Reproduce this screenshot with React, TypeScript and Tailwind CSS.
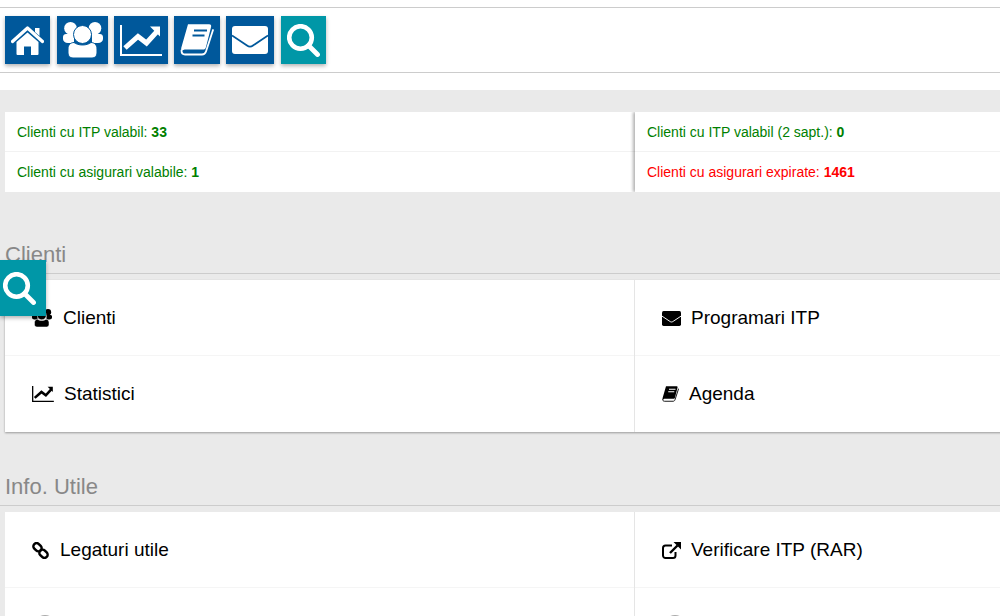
import type { ReactNode } from 'react'

type IconProps = { className?: string; gapColor?: string }

function HomeIcon({ className }: IconProps) {
  return (
    <svg viewBox="0 0 33 29" className={className}>
      <path d="M1.500 15.500 16.500 2l15 13.500" fill="none" stroke="currentColor" strokeWidth="3.200" strokeLinecap="round" strokeLinejoin="round" />
      <path d="M24 2h4.500v8L24 6z" fill="currentColor" />
      <path d="M16.500 6.500 27.500 16v12a1 1 0 0 1-1 1H20v-8.500h-7V29H6.500a1 1 0 0 1-1-1V16z" fill="currentColor" />
    </svg>
  )
}

function UsersIcon({ className, gapColor = '#00589b' }: IconProps) {
  return (
    <svg viewBox="0 0 40 36" className={className}>
      <circle cx="7.500" cy="6.300" r="6.300" fill="currentColor" />
      <circle cx="32" cy="6.300" r="6.300" fill="currentColor" />
      <path d="M0 15c0-2 1.500-3 3-3h8v9H5c-3 0-5-2-5-4zM40 15c0-2-1.500-3-3-3h-8v9h6c3 0 5-2 5-4z" fill="currentColor" />
      <circle cx="19.500" cy="12.500" r="9" fill="currentColor" stroke={gapColor} strokeWidth="1" />
      <path d="M5 27c0-4 2.500-6.500 6-6.500 2 1.500 5 2.500 8.500 2.500s6.500-1 8.500-2.500c3.500 0 6 2.500 6 6.500v4c0 3-2 5-5 5H10c-3 0-5-2-5-5z" fill="currentColor" stroke={gapColor} strokeWidth="1" />
    </svg>
  )
}

function ChartIcon({ className, axis = 2 }: IconProps & { axis?: number }) {
  return (
    <svg viewBox="0 0 42 31" className={className}>
      <path d="M1 0v30h41" fill="none" stroke="currentColor" strokeWidth={axis} />
      <path d="M5 23 18 11.500l8.500 6.500L37 6.500" fill="none" stroke="currentColor" strokeWidth="5" />
      <path d="M30 1.500h10v10z" fill="currentColor" />
    </svg>
  )
}

function BookIcon({ className, gapColor = '#00589b' }: IconProps) {
  return (
    <svg viewBox="0 0 34 32" className={className}>
      <path d="M8 .3h21c2 0 2.500 1 2 3L26 23c-.5 2-1.500 2.500-3 2.500H6c-2 0-3.500.5-4 1.500-1-1-1-2.500-.5-4z" fill="currentColor" />
      <path d="M14 6.500h13M12.500 11.500h12" stroke={gapColor} strokeWidth="2" fill="none" />
      <path d="M1.500 26.500c0 3 1 4 3.500 4h17c2 0 3.300-1 4-3L33 6" fill="none" stroke="currentColor" strokeWidth="1.800" strokeLinecap="round" />
    </svg>
  )
}

function MailIcon({ className, gapColor = '#00589b' }: IconProps) {
  return (
    <svg viewBox="0 0 36 28" className={className}>
      <rect x="0" y="0" width="36" height="28" rx="3" fill="currentColor" />
      <path d="M0 9.500 15 19.500c2 1.500 4 1.500 6 0L36 9.500" fill="none" stroke={gapColor} strokeWidth="1.800" />
    </svg>
  )
}

function SearchIcon({ className }: IconProps) {
  return (
    <svg viewBox="0 0 33 33" className={className}>
      <circle cx="13.500" cy="13.500" r="11.300" fill="none" stroke="currentColor" strokeWidth="4.600" />
      <path d="M21.500 21.500 30.500 30.500" stroke="currentColor" strokeWidth="4.800" strokeLinecap="round" />
    </svg>
  )
}

function ChainIcon({ className }: IconProps) {
  return (
    <svg viewBox="0 0 17 17" className={className}>
      <rect x="1" y="2" width="9" height="6.400" rx="3.200" transform="rotate(45 5.500 5.200)" fill="none" stroke="currentColor" strokeWidth="2.500" />
      <rect x="7" y="8.600" width="9" height="6.400" rx="3.200" transform="rotate(45 11.500 11.800)" fill="none" stroke="currentColor" strokeWidth="2.500" />
    </svg>
  )
}

function ExternalIcon({ className }: IconProps) {
  return (
    <svg viewBox="0 0 19 17" className={className}>
      <path d="M10 3.500H3.500a2.500 2.500 0 0 0-2.500 2.500v7.500a2.500 2.500 0 0 0 2.500 2.500H11a2.500 2.500 0 0 0 2.500-2.500V10" fill="none" stroke="currentColor" strokeWidth="2" />
      <path d="M11.500 0H19v7.500z" fill="currentColor" />
      <path d="M15.500 3.500 8 11" stroke="currentColor" strokeWidth="2.400" />
    </svg>
  )
}

const TOOLBAR = [
  { box: 'w-[45px]', bg: 'bg-[#00589b]', icon: <HomeIcon className="w-[33px] h-[29px]" /> },
  { box: 'w-[51px] ml-[7px]', bg: 'bg-[#00589b]', icon: <UsersIcon className="w-[40px] h-[36px]" /> },
  { box: 'w-[54px] ml-[6px]', bg: 'bg-[#00589b]', icon: <ChartIcon className="w-[42px] h-[31px]" /> },
  { box: 'w-[46px] ml-[6px]', bg: 'bg-[#00589b]', icon: <BookIcon className="w-[34px] h-[32px]" /> },
  { box: 'w-[48px] ml-[6px]', bg: 'bg-[#00589b]', icon: <MailIcon className="w-[36px] h-[28px]" /> },
  { box: 'w-[45px] ml-[7px]', bg: 'bg-[#0097a7]', icon: <SearchIcon className="w-[33px] h-[33px]" /> },
]

function Stat({ label, value, color }: { label: string; value: string; color: string }) {
  return (
    <span className={`text-[14px] ${color}`}>
      {label} <b>{value}</b>
    </span>
  )
}

function NavItem({ icon, label, h = 'h-[76px]', gap = 'gap-[10px]' }: { icon: ReactNode; label: string; h?: string; gap?: string }) {
  return (
    <div className={`flex items-center pl-[27px] text-[19px] text-black ${h} ${gap}`}>
      {icon}
      <span>{label}</span>
    </div>
  )
}

// 세 번째 줄은 화면 아래로 잘려서 아이콘 윗부분만 보인다
function ClippedRow() {
  return (
    <div className="flex items-center h-[76px] pl-[27px] text-[#aaa]">
      <svg viewBox="0 0 26 22" className="w-[26px] h-[22px]">
        <circle cx="13" cy="11" r="11" fill="currentColor" />
      </svg>
    </div>
  )
}

function Heading({ children }: { children: string }) {
  return (
    <h2 className="text-[22px] leading-[26px] text-[#888] pl-[5px] pb-[5px] border-b border-[#ccc]">
      {children}
    </h2>
  )
}

const RIGHT_SHADOW = 'shadow-[-2px_0_3px_rgba(0,0,0,0.3)] [clip-path:inset(0_0_0_-6px)]'

export default function App() {
  return (
    <div
      className="relative h-[616px] w-[1000px] overflow-hidden bg-[#eaeaea]"
      style={{ fontFamily: '"Liberation Sans", Arial, sans-serif' }}
    >
      {/* 상단 툴바 */}
      <div className="bg-white h-[90px] pt-[7px]">
        <div className="flex h-[66px] pl-[5px] pt-[8px] border-y border-[#ccc]">
          {TOOLBAR.map((b, i) => (
            <div
              key={i}
              className={`flex items-center justify-center h-[48px] text-white shadow-[0_2px_4px_rgba(0,0,0,0.3)] ${b.box} ${b.bg}`}
            >
              {b.icon}
            </div>
          ))}
        </div>
      </div>

      {/* 통계 */}
      <div className="ml-[5px] mt-[22px] w-[1100px] grid grid-cols-[630px_1fr]">
        <div className="bg-white">
          <div className="flex items-center h-[40px] pl-[12px] pt-[1px] border-b border-[#f2f2f2]">
            <Stat label="Clienti cu ITP valabil:" value="33" color="text-[#008000]" />
          </div>
          <div className="flex items-center h-[40px] pl-[12px]">
            <Stat label="Clienti cu asigurari valabile:" value="1" color="text-[#008000]" />
          </div>
        </div>
        <div className={`bg-white ${RIGHT_SHADOW}`}>
          <div className="flex items-center h-[40px] pl-[12px] pt-[1px] border-b border-[#f2f2f2]">
            <Stat label="Clienti cu ITP valabil (2 sapt.):" value="0" color="text-[#008000]" />
          </div>
          <div className="flex items-center h-[40px] pl-[12px]">
            <Stat label="Clienti cu asigurari expirate:" value="1461" color="text-[#ff0000]" />
          </div>
        </div>
      </div>

      {/* Clienti */}
      <div className="mt-[50px]">
        <Heading>Clienti</Heading>
        <div className="mt-[6px] ml-[5px] w-[1100px] grid grid-cols-[630px_1fr] bg-white shadow-[0_1px_2px_rgba(0,0,0,0.35)]">
          <div className="border-r border-[#e5e5e5]">
            <div className="border-b border-[#f5f5f5]">
              <NavItem icon={<UsersIcon gapColor="#ffffff" className="w-[20px] h-[20px]" />} label="Clienti" h="h-[75px] pt-[1px]" gap="gap-[11px]" />
            </div>
            <NavItem icon={<ChartIcon axis={2.5} className="w-[22px] h-[16px]" />} label="Statistici" />
          </div>
          <div>
            <div className="border-b border-[#f5f5f5]">
              <NavItem icon={<MailIcon gapColor="#ffffff" className="w-[19px] h-[15px]" />} label="Programari ITP" h="h-[75px] pt-[1px]" />
            </div>
            <NavItem icon={<BookIcon gapColor="#ffffff" className="w-[17px] h-[16px]" />} label="Agenda" />
          </div>
        </div>
      </div>

      {/* Info. Utile */}
      <div className="mt-[42px]">
        <Heading>Info. Utile</Heading>
        <div className="mt-[6px] ml-[5px] w-[1100px] grid grid-cols-[630px_1fr] bg-white">
          <div className="border-r border-[#e5e5e5]">
            <div className="border-b border-[#f5f5f5]">
              <NavItem icon={<ChainIcon className="w-[17px] h-[17px]" />} label="Legaturi utile" h="h-[75px] pt-[1px]" gap="gap-[11px]" />
            </div>
            <ClippedRow />
          </div>
          <div>
            <div className="border-b border-[#f5f5f5]">
              <NavItem icon={<ExternalIcon className="w-[19px] h-[17px]" />} label="Verificare ITP (RAR)" h="h-[75px] pt-[1px]" />
            </div>
            <ClippedRow />
          </div>
        </div>
      </div>

      {/* 플로팅 검색 버튼 */}
      <div className="absolute left-0 top-[260px] flex items-center w-[46px] h-[56px] pl-[3px] bg-[#0097a7] text-white shadow-[0_2px_4px_rgba(0,0,0,0.3)]">
        <SearchIcon className="w-[33px] h-[33px]" />
      </div>
    </div>
  )
}
